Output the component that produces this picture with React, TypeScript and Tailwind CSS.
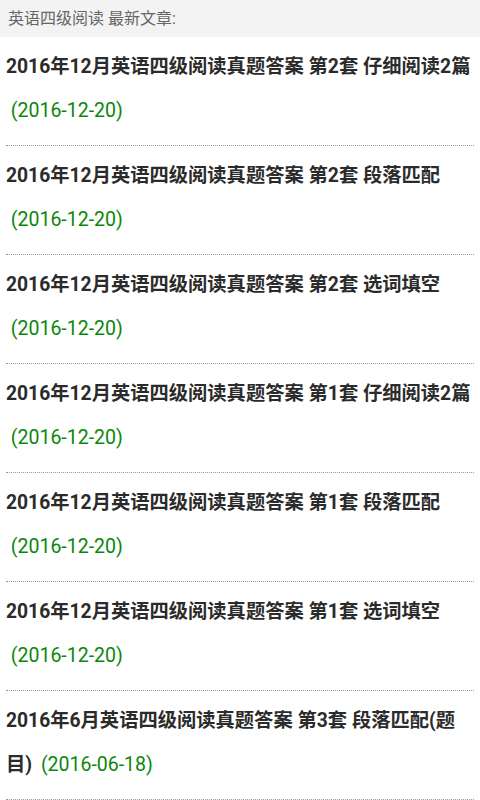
import React from "react";

// ── Data ──────────────────────────────────────────────────────────────

type Article = {
  title: string;
  date: string;
};

const ARTICLES: Article[] = [
  { title: "2016年12月英语四级阅读真题答案 第2套 仔细阅读2篇", date: "2016-12-20" },
  { title: "2016年12月英语四级阅读真题答案 第2套 段落匹配", date: "2016-12-20" },
  { title: "2016年12月英语四级阅读真题答案 第2套 选词填空", date: "2016-12-20" },
  { title: "2016年12月英语四级阅读真题答案 第1套 仔细阅读2篇", date: "2016-12-20" },
  { title: "2016年12月英语四级阅读真题答案 第1套 段落匹配", date: "2016-12-20" },
  { title: "2016年12月英语四级阅读真题答案 第1套 选词填空", date: "2016-12-20" },
  { title: "2016年6月英语四级阅读真题答案 第3套 段落匹配(题目)", date: "2016-06-18" },
];

// ── Page ──────────────────────────────────────────────────────────────

export default function App() {
  return (
    <div className="w-[480px] min-h-[800px] bg-white font-['Roboto','Noto_Sans_CJK_SC',sans-serif]">
      {/* Header */}
      <div className="h-[37px] bg-[#f3f3f3] flex items-center px-[8px]">
        <span className="text-[16px] text-[#666]">英语四级阅读 最新文章:</span>
      </div>

      {/* Article list */}
      <ul className="px-[6px]">
        {ARTICLES.map((a, i) => (
          <li
            key={i}
            className="pt-[8px] pb-[12px] border-b border-dotted border-[#9a9a9a] leading-[44px]"
          >
            <span className="align-top text-[19.3px] font-bold text-[#2b2b2b]">{a.title}</span>{" "}
            <span className="align-top text-[19.5px] text-[#0a870a]">{"\u00a0"}({a.date})</span>
          </li>
        ))}
      </ul>
    </div>
  );
}
